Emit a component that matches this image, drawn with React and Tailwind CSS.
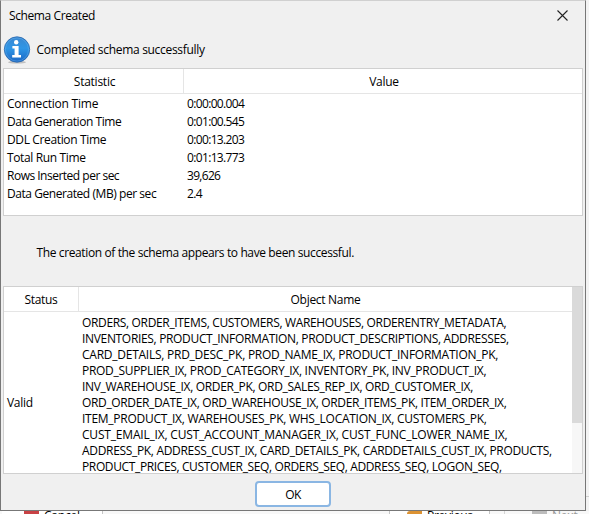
const stats = [
  ['Connection Time', '0:00:00.004', 'tracking-[-0.22px]', 'tracking-[-0.65px]'],
  ['Data Generation Time', '0:01:00.545', 'tracking-[-0.44px]', 'tracking-[-0.65px]'],
  ['DDL Creation Time', '0:00:13.203', 'tracking-[-0.36px]', 'tracking-[-0.65px]'],
  ['Total Run Time', '0:01:13.773', 'tracking-[-0.36px]', 'tracking-[-0.65px]'],
  ['Rows Inserted per sec', '39,626', 'tracking-[-0.5px]', 'tracking-[-0.7px]'],
  ['Data Generated (MB) per sec', '2.4', 'tracking-[-0.44px]', 'tracking-[-0.6px]'],
];

const objectLines = [
  ['ORDERS, ORDER_ITEMS, CUSTOMERS, WAREHOUSES, ORDERENTRY_METADATA,', 'tracking-[-0.34px]'],
  ['INVENTORIES, PRODUCT_INFORMATION, PRODUCT_DESCRIPTIONS, ADDRESSES,', 'tracking-[-0.33px]'],
  ['CARD_DETAILS, PRD_DESC_PK, PROD_NAME_IX, PRODUCT_INFORMATION_PK,', 'tracking-[-0.25px]'],
  ['PROD_SUPPLIER_IX, PROD_CATEGORY_IX, INVENTORY_PK, INV_PRODUCT_IX,', 'tracking-[-0.3px]'],
  ['INV_WAREHOUSE_IX, ORDER_PK, ORD_SALES_REP_IX, ORD_CUSTOMER_IX,', 'tracking-[-0.32px]'],
  ['ORD_ORDER_DATE_IX, ORD_WAREHOUSE_IX, ORDER_ITEMS_PK, ITEM_ORDER_IX,', 'tracking-[-0.35px]'],
  ['ITEM_PRODUCT_IX, WAREHOUSES_PK, WHS_LOCATION_IX, CUSTOMERS_PK,', 'tracking-[-0.27px]'],
  ['CUST_EMAIL_IX, CUST_ACCOUNT_MANAGER_IX, CUST_FUNC_LOWER_NAME_IX,', 'tracking-[-0.19px]'],
  ['ADDRESS_PK, ADDRESS_CUST_IX, CARD_DETAILS_PK, CARDDETAILS_CUST_IX, PRODUCTS,', 'tracking-[-0.32px]'],
  ['PRODUCT_PRICES, CUSTOMER_SEQ, ORDERS_SEQ, ADDRESS_SEQ, LOGON_SEQ,', 'tracking-[-0.37px]'],
];

function InfoIcon() {
  return (
    <svg width="28" height="28" viewBox="0 0 28 28" className="block">
      <defs>
        <linearGradient id="ball" x1="0" y1="0" x2="0" y2="1">
          <stop offset="0" stopColor="#3a87d0" />
          <stop offset="0.45" stopColor="#2f96e6" />
          <stop offset="1" stopColor="#1b66c4" />
        </linearGradient>
      </defs>
      <ellipse cx="14" cy="26.2" rx="9" ry="1.4" fill="#a9a9a9" opacity="0.7" />
      <circle cx="14" cy="13.5" r="12.7" fill="url(#ball)" stroke="#2a68ad" strokeWidth="0.8" />
      <circle cx="14" cy="13.5" r="11.6" fill="none" stroke="#6db8f0" strokeWidth="0.7" opacity="0.6" />
      <circle cx="13.2" cy="6.3" r="2.2" fill="#fff" />
      <path d="M9.4 10h6.2v9h2.4v2.4H9.2V19h2.4v-6.6H9.4z" fill="#fff" />
    </svg>
  );
}

function WizardBar() {
  return (
    <div className="flex h-[3px] overflow-hidden bg-[#f8f8f8] pl-[2px]">
      <div className="flex w-[101px] border-r border-[#c5c5c5] bg-white pl-[22px]">
        <div className="h-[3px] w-[15px] bg-[#c84245]" />
        <span className="ml-[5px] leading-[10px] tracking-[-0.2px]">Cancel</span>
      </div>
      <div className="ml-[286px] flex w-[101px] border-x border-[#c5c5c5] bg-white pl-[17px]">
        <div className="h-[3px] w-[15px] rounded-tl-[3px] bg-[#dc9232]" />
        <span className="ml-[5px] leading-[10px] tracking-[-0.3px]">Previous</span>
      </div>
      <div className="ml-[14px] flex flex-1 border-l border-[#d5d5d5] pl-[27px] text-[#999]">
        <div className="h-[3px] w-[15px] bg-[#bcbcbc]" />
        <span className="ml-[5px] leading-[10px] tracking-[-0.2px]">Next</span>
      </div>
    </div>
  );
}

export default function App() {
  return (
    <div className="h-[514px] w-[589px] overflow-hidden bg-[#f3f3f3] font-['Open_Sans','Noto_Sans',sans-serif] text-[12px] whitespace-nowrap text-black">
      <div className="flex h-[511px]">
        <div className="flex h-[511px] w-[586px] flex-col border-t border-r border-b border-l border-t-[#d0d0d0] border-r-[#777] border-b-[#777] border-l-[#777] bg-[#f0f0f0] pr-[2px] pl-[2px]">
          <header className="flex h-[30px] items-center justify-between pr-[14px] pl-[6px]">
            <span className="tracking-[-0.4px]">Schema Created</span>
            <svg width="11" height="11" viewBox="0 0 11 11" className="mr-[1px] mb-[1px]">
              <path d="M.5.5l10 10M10.5.5l-10 10" stroke="#222" strokeWidth="1.1" />
            </svg>
          </header>
          <div className="flex h-[37px] items-center">
            <InfoIcon />
            <span className="ml-[5.5px] tracking-[-0.31px]">Completed schema successfully</span>
          </div>
          <section className="h-[148px] shrink-0 border border-[#d0d0d0] bg-white">
            <div className="flex h-[25px] border-b border-[#e5e5e5] leading-[26px]">
              <div className="w-[180px] border-r border-[#e5e5e5] pl-[2px] text-center tracking-[-0.25px]">Statistic</div>
              <div className="flex-1 pl-[2px] text-center tracking-[-0.3px]">Value</div>
            </div>
            {stats.map(([name, value, nameTracking, valueTracking]) => (
              <div key={name} className="flex h-[18px] pl-[3px] leading-[20px]">
                <span className={`w-[180px] ${nameTracking}`}>{name}</span>
                <span className={valueTracking}>{value}</span>
              </div>
            ))}
          </section>
          <p className="h-[70px] shrink-0 pl-[33.5px] leading-[74px] tracking-[-0.38px]">
            The creation of the schema appears to have been successful.
          </p>
          <section className="flex h-[188px] shrink-0 border border-[#d0d0d0] bg-white">
            <div className="flex min-w-0 flex-1 flex-col">
              <div className="flex h-[25px] shrink-0 border-b border-[#e5e5e5] leading-[26px]">
                <div className="w-[75px] border-r border-[#e5e5e5] text-center tracking-[-0.3px]">Status</div>
                <div className="flex-1 text-center tracking-[-0.3px]">Object Name</div>
              </div>
              <div className="flex h-[161px] overflow-hidden">
                <div className="w-[75px] pt-[83px] pl-[3px] leading-[16px] tracking-[-0.3px]">Valid</div>
                <div className="pt-[3px] pl-[3px] leading-[16px]">
                  {objectLines.map(([line, tracking]) => (
                    <div key={line} className={`w-max ${tracking}`}>{line}</div>
                  ))}
                </div>
              </div>
            </div>
            <div className="w-[10px] bg-[#f7f7f7]">
              <div className="h-[136px] bg-[#dadada]" />
            </div>
          </section>
          <footer className="flex flex-1 items-center justify-center pt-[4px]">
            <button className="h-[26px] w-[76px] rounded-[4px] border-2 border-[#8ab6e3] bg-white leading-[23px] tracking-[-0.5px]">OK</button>
          </footer>
        </div>
        <div className="mt-[496px] h-[15px] flex-1 border-t border-[#cfcfcf] bg-[#f3f3f3]" />
      </div>
      <WizardBar />
    </div>
  );
}
